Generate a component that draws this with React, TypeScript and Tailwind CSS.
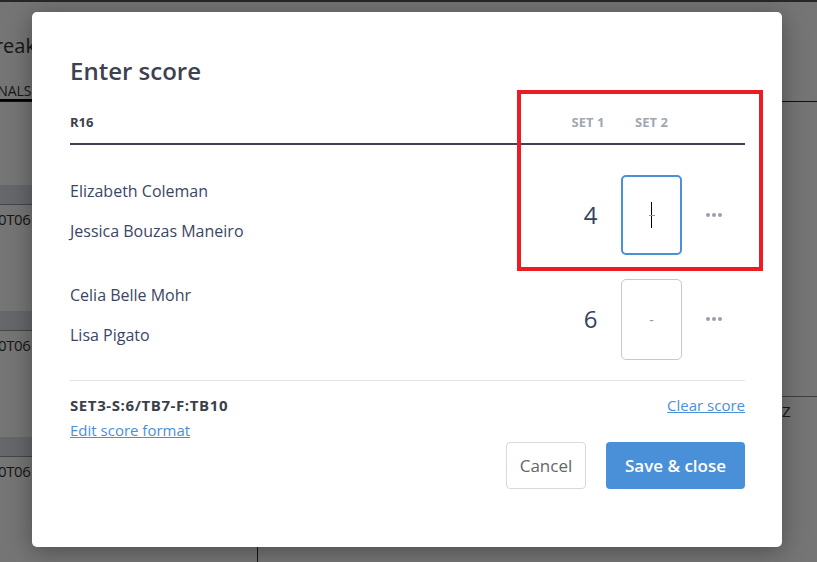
import React from 'react';

const font = { fontFamily: '"Open Sans", "Noto Sans", sans-serif' };

function Background() {
  const rows = [0, 1, 2];
  return (
    <div className="flex h-[562px] w-[817px] flex-col overflow-hidden bg-white text-[#333]" style={font}>
      <div className="h-[2px] bg-[#555]" />
      <div className="ml-[-18px] mt-[32px] text-[20px] leading-6">Break</div>
      <div className="mt-[25px] flex border-b border-[#222]">
        <div className="ml-[-14px] border-b-2 border-black text-[14px] leading-4">FINALS</div>
      </div>
      <div className="flex flex-1">
        <div className="w-[258px] border-r border-[#333]">
          <div className="mt-[83px] flex flex-col gap-[82px]">
            {rows.map((r) => (
              <div key={r}>
                <div className="h-[20px] border-b border-[#999] bg-[#dde1e6]" />
                <div className="mt-[4px] ml-[-2px] text-[15px] leading-5 tracking-tight">0T06</div>
              </div>
            ))}
          </div>
        </div>
        <div className="flex-1">
          <div className="mt-[294px] border-t border-[#888] pl-[524px] pt-[4px] text-[15px] leading-5">Z</div>
        </div>
      </div>
    </div>
  );
}

function ScoreRow({ names, set1, active }: { names: string[]; set1: string; active?: boolean }) {
  return (
    <div className="flex h-[80px] items-center">
      <div className="mb-[9px] flex flex-1 flex-col gap-[20px] text-[16px] leading-5 text-[#3b4664]">
        {names.map((n) => (
          <div key={n}>{n}</div>
        ))}
      </div>
      <div className="w-[60px] pl-[5px] text-center text-[24px] text-[#37415e]">{set1}</div>
      <div
        className={
          active
            ? 'ml-[3px] flex h-[80px] w-[61px] items-center justify-center rounded-[5px] border-2 border-[#4a90d9]'
            : 'ml-[3px] flex h-[81px] w-[61px] items-center justify-center rounded-[5px] border border-[#c8c8c8]'
        }
      >
        {active ? (
          <div className="relative flex h-[26px] w-[8px] items-center justify-center">
            <div className="h-[26px] w-px bg-black" />
            <div className="absolute h-px w-[6px] bg-[#999]" />
          </div>
        ) : (
          <span className="text-[14px] text-[#999]">-</span>
        )}
      </div>
      <div className="flex w-[63px] justify-center gap-[2px]">
        <span className="h-[4px] w-[4px] rounded-full bg-[#9a9fae]" />
        <span className="h-[4px] w-[4px] rounded-full bg-[#9a9fae]" />
        <span className="h-[4px] w-[4px] rounded-full bg-[#9a9fae]" />
      </div>
    </div>
  );
}

export default function App() {
  return (
    <div className="relative h-[562px] w-[817px] overflow-hidden">
      <Background />
      <div className="absolute inset-0 bg-black/[0.54]">
        <div
          className="relative ml-[32px] mt-[12px] h-[535px] w-[750px] rounded-[5px] bg-white pl-[38px] pr-[37px] pt-[43px] shadow-[0_4px_24px_rgba(0,0,0,0.35)]"
          style={font}
        >
          <h2 className="text-[24px] font-semibold leading-8 text-[#3d4150]">Enter score</h2>

          <div className="mt-[27px] flex items-center border-b-2 border-[#3f4152] pb-[13px]">
            <div className="flex-1 text-[13px] font-bold leading-4 text-[#3b3f4c]">R16</div>
            <div className="w-[60px] text-center text-[13px] font-bold leading-4 text-[#a2a6b3]">SET 1</div>
            <div className="ml-[3px] w-[61px] text-center text-[13px] font-bold leading-4 text-[#a2a6b3]">SET 2</div>
            <div className="w-[63px]" />
          </div>

          <div className="flex flex-col gap-[24px] pt-[30px]">
            <ScoreRow names={['Elizabeth Coleman', 'Jessica Bouzas Maneiro']} set1="4" active />
            <ScoreRow names={['Celia Belle Mohr', 'Lisa Pigato']} set1="6" />
          </div>

          <div className="mt-[21px] border-t border-[#e2e2e2] pt-[14px]">
            <div className="flex items-start justify-between">
              <div className="flex flex-col">
                <div className="text-[15px] font-bold leading-5 tracking-[0.6px] text-[#3b3f4c]">SET3-S:6/TB7-F:TB10</div>
                <a className="mt-[5px] text-[15px] leading-5 text-[#4a90d9] underline">Edit score format</a>
              </div>
              <a className="text-[15px] leading-5 text-[#4a90d9] underline">Clear score</a>
            </div>
            <div className="mt-[2px] flex justify-end gap-[20px]">
              <button className="h-[47px] w-[80px] rounded-[4px] border border-[#d9d9d9] bg-white text-[17px] text-[#666]">
                Cancel
              </button>
              <button className="h-[47px] w-[139px] rounded-[4px] bg-[#4a90d9] text-[17px] font-semibold text-white">
                Save &amp; close
              </button>
            </div>
          </div>

          <div className="absolute left-[485px] top-[78px] h-[181px] w-[246px] border-4 border-[#ed1c24]" />
        </div>
      </div>
    </div>
  );
}
